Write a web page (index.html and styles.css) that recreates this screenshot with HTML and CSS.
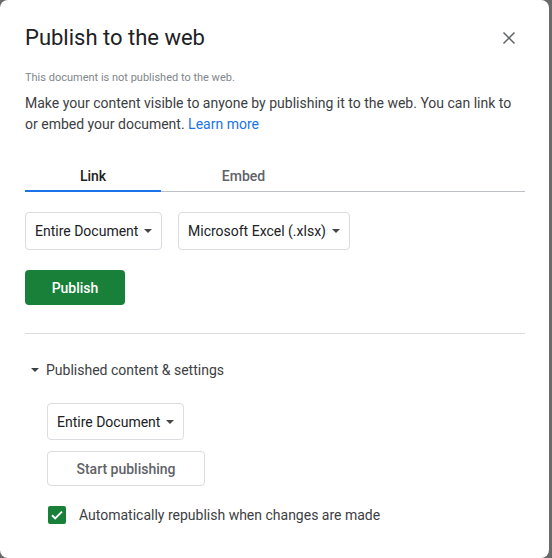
FILE: index.html
```html
<!DOCTYPE html>
<html>
<head>
<meta charset="utf-8">
<link rel="stylesheet" href="styles.css">
</head>
<body>
<div class="dialog">
  <div class="header">
    <div class="title">Publish to the web</div>
    <button class="close" aria-label="Close">
      <svg width="24" height="24" viewBox="0 0 24 24"><path d="M6.5 6.5L17.5 17.5M17.5 6.5L6.5 17.5" fill="none" stroke="#5f6368" stroke-width="1.5"/></svg>
    </button>
  </div>
  <div class="status">This document is not published to the web.</div>
  <p class="desc">Make your content visible to anyone by publishing it to the web. You can link to or embed your document. <a href="#" class="link">Learn more</a></p>
  <div class="tabs">
    <div class="tab active">Link</div>
    <div class="tab second">Embed</div>
  </div>
  <div class="selects">
    <div class="select w1">Entire Document<span class="caret"></span></div>
    <div class="select w2">Microsoft Excel (.xlsx)<span class="caret"></span></div>
  </div>
  <button class="publish">Publish</button>
  <div class="divider"></div>
  <div class="expander"><span class="exp-caret"></span>Published content &amp; settings</div>
  <div class="settings">
    <div class="select w3">Entire Document<span class="caret"></span></div>
    <button class="start">Start publishing</button>
    <label class="check">
      <span class="box"><svg width="18" height="18" viewBox="0 0 18 18"><path d="M4 9.2l3.2 3.2L14 5.6" fill="none" stroke="#fff" stroke-width="2"/></svg></span>
      Automatically republish when changes are made
    </label>
  </div>
</div>
</body>
</html>
```
FILE: styles.css
```css
html, body {
  margin: 0;
  padding: 0;
}
body {
  background: #6a6a6a;
  width: 552px;
  height: 558px;
  overflow: hidden;
  font-family: Roboto, "Liberation Sans", Arial, sans-serif;
}
.dialog {
  width: 549px;
  height: 558px;
  background: #fff;
  border-radius: 8px;
  box-sizing: border-box;
  padding: 0 24px 0 25px;
}
.header {
  display: flex;
  align-items: center;
  justify-content: space-between;
  padding-top: 24px;
}
.title {
  font-size: 22px;
  line-height: 28px;
  color: #202124;
  font-weight: 400;
}
.close {
  border: 0;
  background: none;
  padding: 0;
  width: 24px;
  height: 24px;
  margin-right: 4px;
  display: flex;
}
.close svg { width: 24px; height: 24px; }
.status {
  margin-top: 18px;
  font-size: 11px;
  line-height: 16px;
  color: #80868b;
}
.desc {
  margin: 7px 0 0;
  font-size: 14px;
  line-height: 21px;
  color: #3c4043;
}
.link {
  color: #1a73e8;
  text-decoration: none;
}
.tabs {
  display: flex;
  margin-top: 21px;
  box-shadow: inset 0 -1px 0 #bdc1c6;
  height: 36px;
}
.tab {
  width: 136px;
  text-align: center;
  font-size: 14px;
  font-weight: 500;
  line-height: 20px;
  padding-top: 10px;
  color: #5f6368;
  box-sizing: border-box;
}
.tab.second {
  width: 165px;
}
.tab.active {
  color: #202124;
  border-bottom: 2px solid #1a73e8;
}
.selects {
  display: flex;
  gap: 16px;
  margin-top: 20px;
}
.select {
  display: flex;
  align-items: center;
  justify-content: space-between;
  box-sizing: border-box;
  height: 38px;
  padding: 0 9px 0 9px;
  border: 1px solid #dadce0;
  border-radius: 4px;
  font-size: 14px;
  color: #202124;
  white-space: nowrap;
}
.w1 { width: 137px; }
.w2 { width: 172px; }
.w3 { width: 137px; height: 37px; }
.caret {
  width: 0;
  height: 0;
  border-left: 4px solid transparent;
  border-right: 4px solid transparent;
  border-top: 4px solid #444746;
  margin-left: 6px;
}
.publish {
  display: block;
  margin-top: 20px;
  width: 100px;
  height: 35px;
  border: 0;
  border-radius: 4px;
  background: #188038;
  color: #fff;
  font-family: inherit;
  font-size: 14px;
  font-weight: 500;
}
.divider {
  margin-top: 28px;
  height: 1px;
  background: #dadce0;
}
.expander {
  display: flex;
  align-items: center;
  margin-top: 26px;
  font-size: 14px;
  line-height: 20px;
  color: #3c4043;
}
.exp-caret {
  width: 0;
  height: 0;
  border-left: 4px solid transparent;
  border-right: 4px solid transparent;
  border-top: 4px solid #3c4043;
  margin: 0 7px 0 6px;
}
.settings {
  margin-top: 23px;
  padding-left: 22px;
  display: flex;
  flex-direction: column;
  align-items: flex-start;
}
.start {
  margin-top: 11px;
  width: 158px;
  height: 35px;
  border: 1px solid #dadce0;
  border-radius: 4px;
  background: #fff;
  color: #5f6368;
  font-family: inherit;
  font-size: 14px;
  font-weight: 500;
}
.check {
  display: flex;
  align-items: center;
  margin-top: 20px;
  font-size: 14px;
  color: #3c4043;
}
.box {
  width: 18px;
  height: 18px;
  border-radius: 2px;
  background: #188038;
  margin: 0 13px 0 1px;
  display: flex;
}
```
